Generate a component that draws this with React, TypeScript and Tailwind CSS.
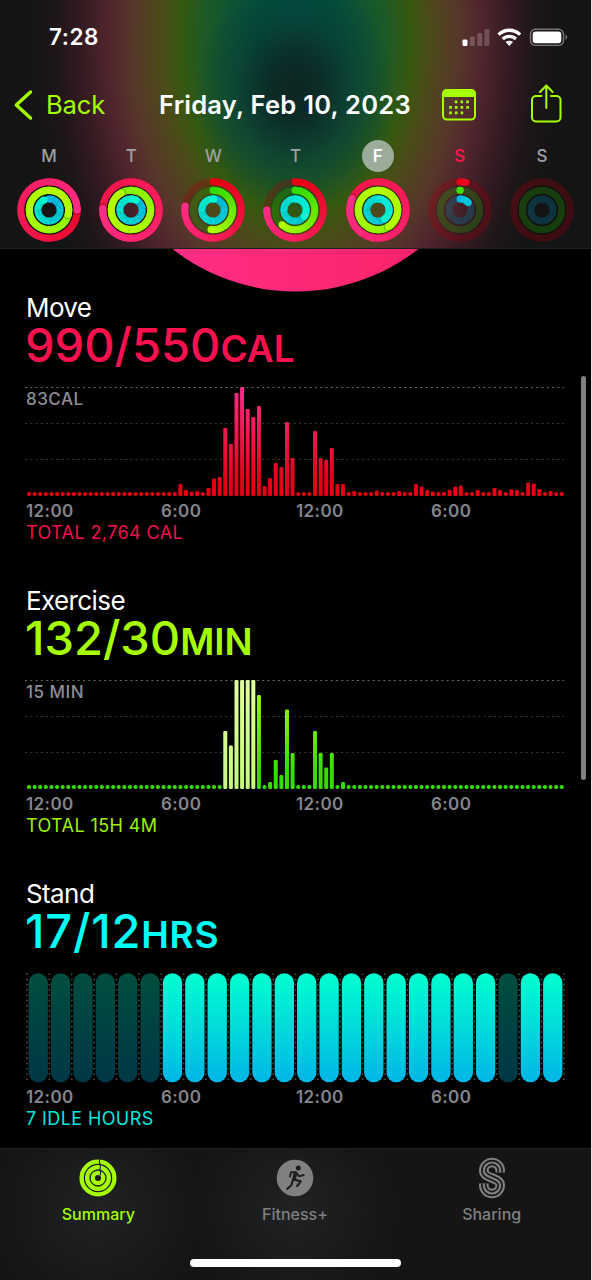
import { useId } from "react";

type Ring = { sweep: number; r: number; from: number[]; to: number[] };

const RED = [230, 0, 18];
const PINK = [255, 45, 135];
const GREEN = [48, 220, 0];
const LIME = [178, 255, 0];
const BLUE = [0, 184, 228];
const TEAL = [0, 250, 208];

// sweep of each ring in degrees, more than 360 is a second lap
const days = [
  { name: "M", move: 450, exercise: 823, stand: 333 },
  { name: "T", move: 633, exercise: 690, stand: 388 },
  { name: "W", move: 278, exercise: 186, stand: 366 },
  { name: "T", move: 270, exercise: 221, stand: 486 },
  { name: "F", move: 654, exercise: 868, stand: 505, selected: true },
  { name: "S", move: 12, exercise: 0.5, stand: 48, today: true },
  { name: "S", move: 0, exercise: 0, stand: 0 },
];

const flat = (n: number) => Array<number>(n).fill(4);

const moveBars = [
  ...flat(27),
  12, 6, 4.5, 5, 4, 8, 17.5, 19, 68, 52, 103, 109, 87, 79, 90, 10, 18, 33, 29,
  74, 38, 4, 4, 4, 65, 38, 36, 48, 12, 12, 4, 5, 4, 4, 4, 5.5, 4, 4, 4, 5, 4, 4,
  12, 9.5, 6, 4.5, 4, 4, 6, 9.5, 10.5, 4, 4, 6, 4, 4, 8, 6, 4, 6.5, 6, 4, 13.5,
  12.5, 7, 4, 5, 4, 4,
];

const exerciseBars = [
  ...flat(35),
  58, 43.5, 109, 109, 109, 109, 94, 4, 7, 29, 14, 79.5, 36, 4, 4, 4, 58, 36,
  21.5, 36, 4, 7,
  ...flat(39),
];

const idleHours = [0, 1, 2, 3, 4, 5, 21];

function point(r: number, deg: number) {
  const a = ((deg - 90) * Math.PI) / 180;
  return [33 + r * Math.cos(a), 33 + r * Math.sin(a)];
}

function RingArc({ sweep, r, from, to }: Ring) {
  const mix = (t: number) => {
    const k = sweep > 680 ? Math.min(1, t * 1.3) : t;
    return `rgb(${from.map((c, i) => Math.round(c + (to[i] - c) * k)).join(",")})`;
  };
  const steps = Math.ceil(sweep / 6);
  const [sx, sy] = point(r, 0);
  const [ex, ey] = point(r, sweep);
  const [hx, hy] = point(r, sweep + 4);
  return (
    <g fill="none" strokeWidth="7">
      <circle cx="33" cy="33" r={r} stroke={mix(0)} opacity="0.21" />
      {sweep > 0 && <circle cx={sx} cy={sy} r="3.5" fill={mix(0)} />}
      {Array.from({ length: steps }, (_, i) => {
        const a = (sweep * i) / steps;
        const b = (sweep * (i + 1)) / steps;
        const [x1, y1] = point(r, a);
        const [x2, y2] = point(r, Math.min(b + 1, sweep));
        return (
          <g key={i}>
            {i === steps - 1 && sweep > 340 && (
              <circle cx={hx} cy={hy} r="3.4" fill="#000" opacity="0.22" />
            )}
            <path
              d={`M${x1} ${y1}A${r} ${r} 0 0 1 ${x2} ${y2}`}
              stroke={mix(i / steps)}
            />
          </g>
        );
      })}
      {sweep > 0 && (
        <circle cx={ex} cy={ey} r="3.5" fill={mix(sweep < 60 ? 0.1 : 1)} />
      )}
    </g>
  );
}

function Header() {
  return (
    <header className="h-[249px] border-b border-[#202020] bg-[radial-gradient(ellipse_100px_120px_at_295px_90px,#0d2523_0%,#0d2825e6_25%,#0b3a3390_60%,transparent_100%),radial-gradient(ellipse_275px_420px_at_295px_40px,#005248_0%,#00503f_14%,#0c5438_22%,#1c5a26_33%,#365810_42%,#4b4b18_49%,#57372a_59%,#50252d_68%,#341a21_78%,#1e1618_87%,#141414_97%)]">
      <div className="flex h-[73px] items-center justify-between pr-6 pl-[49px]">
        <span className="text-[22.5px] font-semibold tracking-[0.5px] text-white">
          7:28
        </span>
        <svg width="106" height="20" viewBox="0 0 106 20" fill="#fff">
          <g transform="translate(0.5 0)">
            <rect x="1" y="12.5" width="5" height="6.5" rx="1.3" />
            <g opacity="0.2">
              <rect x="8.3" y="9.5" width="5" height="9.5" rx="1.3" />
              <rect x="15.8" y="6" width="5" height="13" rx="1.3" />
              <rect x="23" y="2" width="5" height="17" rx="1.3" />
            </g>
            <g fill="none" stroke="#fff" strokeWidth="3.4">
              <path d="M37 7.6a15.5 15.5 0 0 1 21.6 0" />
              <path d="M41.2 12a9.5 9.5 0 0 1 13.2 0" />
            </g>
            <path d="M44.1 15.1a5.4 5.4 0 0 1 7.4 0L47.8 19z" />
            <rect
              x="69"
              y="2.2"
              width="33"
              height="16.2"
              rx="5"
              fill="none"
              stroke="#777"
              strokeWidth="1.4"
            />
            <rect x="71.2" y="4.4" width="28.6" height="11.8" rx="3" />
            <path d="M104 7q3.200 3.200 0 6.400z" fill="#777" />
          </g>
        </svg>
      </div>
      <div className="flex h-16 items-center text-[#a6ff00]">
        <svg width="34" height="32" viewBox="0 0 34 32" className="ml-1">
          <path
            d="M26.5 3 12.3 16 26.5 29"
            fill="none"
            stroke="currentColor"
            strokeWidth="3.4"
            strokeLinecap="round"
            strokeLinejoin="round"
          />
        </svg>
        <span className="ml-2 w-[113px] text-[25.5px] tracking-[-0.1px]">
          Back
        </span>
        <h1 className="w-[283px] text-[25.5px] font-semibold tracking-[0.25px] whitespace-nowrap text-white">
          Friday, Feb 10, 2023
        </h1>
        <svg width="34" height="32" viewBox="0 0 34 32">
          <rect
            x="1"
            y="1"
            width="32"
            height="29.6"
            rx="4"
            fill="none"
            stroke="currentColor"
            strokeWidth="2"
          />
          <path d="M0 8V5a5 5 0 0 1 5-5h24a5 5 0 0 1 5 5v3z" fill="currentColor" />
          <path
            d="M12.8 12.9h15.4M7.2 18.4h21M7.2 23.9h15"
            stroke="currentColor"
            strokeWidth="2.6"
            strokeDasharray="2.6 3.1"
          />
        </svg>
        <svg
          width="32"
          height="40"
          viewBox="0 0.5 32 40"
          className="-mt-0.5 ml-[54px]"
          fill="none"
          stroke="currentColor"
          strokeWidth="2"
          strokeLinecap="round"
          strokeLinejoin="round"
        >
          <path d="M11.5 12.5H6a4 4 0 0 0-4 4V34a4 4 0 0 0 4 4h20.5a4 4 0 0 0 4-4V16.5a4 4 0 0 0-4-4H21" />
          <path d="M16.3 24.5V2M10 8.5 16.3 2l6.3 6.5" />
        </svg>
      </div>
      <div className="ml-2 grid w-[575px] grid-cols-7">
        {days.map((day, i) => (
          <div key={i} className="flex flex-col items-center pt-[3px]">
            <span
              className={
                "flex size-8 items-center justify-center rounded-full pt-0.5 text-[17px] font-medium " +
                (day.selected
                  ? "bg-[#9bac9b] font-semibold text-white"
                  : day.today
                    ? "text-[#ff1450]"
                    : "text-[#a0a0a2]")
              }
            >
              {day.name}
            </span>
            <svg width="66" height="66" viewBox="0 0 66 66" className="mt-[5px]">
              <circle
                cx="33"
                cy="33"
                r="19.5"
                fill="none"
                stroke="#000"
                strokeWidth="24"
                opacity={day.move > 300 ? 0.3 : 0.12}
              />
              <RingArc sweep={day.move} r={28.2} from={RED} to={PINK} />
              <RingArc sweep={day.exercise} r={19.7} from={GREEN} to={LIME} />
              <RingArc sweep={day.stand} r={11.1} from={BLUE} to={TEAL} />
            </svg>
          </div>
        ))}
      </div>
    </header>
  );
}

function BarChart({
  bars,
  top,
  bottom,
  workout,
}: {
  bars: number[];
  top: string;
  bottom: string;
  workout?: number[];
}) {
  const id = useId();
  return (
    <svg width="542" height="110" viewBox="0 0 542 110" className="block">
      <defs>
        <linearGradient
          id={id}
          gradientUnits="userSpaceOnUse"
          x1="0"
          y1="0"
          x2="0"
          y2="109"
        >
          <stop offset="0" stopColor={top} />
          <stop offset="0.85" stopColor={bottom} />
        </linearGradient>
        <linearGradient
          id={id + "w"}
          gradientUnits="userSpaceOnUse"
          x1="0"
          y1="0"
          x2="0"
          y2="109"
        >
          <stop offset="0" stopColor="#dfffa0" />
          <stop offset="1" stopColor="#c6f780" />
        </linearGradient>
      </defs>
      <g strokeDasharray="2 3.27">
        <path d="M1 .5H540" stroke="#686868" />
        <path d="M1 36.5H540M1 72.5H540" stroke="#383838" />
      </g>
      {bars.map((h, i) => (
        <rect
          key={i}
          x={3 + i * 5.608}
          y={109 - h}
          width="4"
          height={h}
          rx={h <= 4 ? 1.8 : 1.3}
          fill={`url(#${id}${workout?.includes(i) ? "w" : ""})`}
        />
      ))}
    </svg>
  );
}

function StandChart() {
  return (
    <svg width="542" height="110" viewBox="0 0 542 110" className="block">
      <defs>
        <linearGradient id="stand" x1="0" y1="0" x2="0" y2="1">
          <stop offset="0" stopColor="#00ffd0" />
          <stop offset="1" stopColor="#00b6e6" />
        </linearGradient>
        <linearGradient id="idle" x1="0" y1="0" x2="0" y2="1">
          <stop offset="0" stopColor="#004e3e" />
          <stop offset="1" stopColor="#003746" />
        </linearGradient>
      </defs>
      {Array.from({ length: 25 }, (_, i) => (
        <path
          key={i}
          d={`M${3 + i * 22.37} .5V109`}
          stroke="#505050"
          strokeWidth="1.6"
          strokeDasharray="1.6 3.65"
        />
      ))}
      {Array.from({ length: 24 }, (_, i) => (
        <rect
          key={i}
          x={4.6 + i * 22.37}
          y="0.3"
          width="19.3"
          height="109"
          rx="9.6"
          fill={idleHours.includes(i) ? "url(#idle)" : "url(#stand)"}
        />
      ))}
    </svg>
  );
}

function Section({
  title,
  value,
  unit,
  color,
  max,
  total,
  totalColor,
  children,
}: {
  title: string;
  value: string;
  unit: string;
  color: string;
  max?: string;
  total: string;
  totalColor: string;
  children: React.ReactNode;
}) {
  return (
    <section className="h-[293px] shrink-0 pt-px">
      <h2 className="pl-[26px] text-[26px] leading-[30px] tracking-[-0.6px] text-white">
        {title}
      </h2>
      <p
        className={
          "-mt-px h-[47px] pl-[25px] text-[47px] leading-[46px] font-medium whitespace-nowrap " +
          color
        }
      >
        {value}
        <span className="text-[37px] leading-none font-semibold">{unit}</span>
      </p>
      <div className="relative mt-[18px] ml-6">
        {max && (
          <span className="absolute top-0.5 left-0.5 text-[17px] leading-5 font-medium tracking-[0.5px] text-[#8e8e93]">
            {max}
          </span>
        )}
        {children}
      </div>
      <div className="mt-[3px] grid w-[566px] grid-cols-4 pl-[26px] text-[17px] leading-[22px] font-semibold tracking-[0.4px] text-[#85858a]">
        <span>12:00</span>
        <span>6:00</span>
        <span>12:00</span>
        <span>6:00</span>
      </div>
      <p
        className={
          "pl-[26px] text-[18px] leading-[22px] tracking-[0.4px] " + totalColor
        }
      >
        {total}
      </p>
    </section>
  );
}

function TabBar() {
  return (
    <footer className="relative h-[132px] border-t border-[#202020] bg-[#151515] bg-[radial-gradient(circle_at_98px_60px,#202223_0%,transparent_100px),radial-gradient(circle_at_295px_60px,#202223_0%,transparent_100px)] text-[16px] font-medium">
      <nav className="grid w-[590px] grid-cols-3 pt-2">
        <div className="flex flex-col items-center text-[#a6ff00]">
          <svg width="42" height="42" viewBox="0 0 42 42">
            <g
              transform="translate(21 21)"
              fill="none"
              stroke="currentColor"
              strokeWidth="4.3"
            >
              <circle r="16.4" />
              <circle r="10.8" />
              <circle r="5.2" />
              <path
                d="M1.5-19V-15l1 1.5-.5 5 .8 1-.6 5"
                stroke="#1c1e1e"
                strokeWidth="1.1"
              />
            </g>
          </svg>
          <span className="leading-[31px]">Summary</span>
        </div>
        <div className="flex flex-col items-center text-[#808080]">
          <svg width="42" height="42" viewBox="-3 -3 42 42">
            <circle cx="18" cy="18" r="18.3" fill="currentColor" />
            <circle cx="21.3" cy="8" r="2.5" fill="#1c1e1e" />
            <g
              fill="none"
              stroke="#1c1e1e"
              strokeWidth="1.9"
              strokeLinecap="round"
              strokeLinejoin="round"
            >
              <path d="M13 16.5 14 12.3h5L22 16.3l4.7-1.3" />
              <path d="M18.5 13.5 17 19" strokeWidth="3.8" />
              <path
                d="m17.5 19.6 6.2 1.8-3.6 4.6M16 20l-1.7 5.2-4 3.6"
                strokeWidth="2.2"
              />
            </g>
          </svg>
          <span className="leading-[31px]">Fitness+</span>
        </div>
        <div className="flex flex-col items-center text-[#808080]">
          <svg width="42" height="42" viewBox="-8 -0.5 42 42" fill="none">
            {[
              ["#808080", 9.6],
              ["#171717", 5.4],
              ["#808080", 2.2],
            ].map(([stroke, w]) => (
              <path
                key={w}
                d="M21.2 15V13.2a8.2 8.2 0 0 0-16.4 0C4.8 21.5 21.2 19.5 21.2 27.8a8.2 8.2 0 0 1-16.4 0V26"
                stroke={stroke}
                strokeWidth={w}
              />
            ))}
          </svg>
          <span className="leading-[31px]">Sharing</span>
        </div>
      </nav>
      <div className="mx-auto mt-[29px] h-2 w-[211px] rounded-full bg-white" />
    </footer>
  );
}

export default function App() {
  return (
    <div className="flex h-[1280px] w-[592px] flex-col overflow-hidden border-r border-[#e4e4e4] bg-black font-['Inter',sans-serif]">
      <Header />
      <main className="relative flex h-[899px] flex-col overflow-hidden">
        <svg width="591" height="43" viewBox="0 0 591 43" className="shrink-0">
          <defs>
            <linearGradient id="ring" x1="0.2" y1="0" x2="0.8" y2="0">
              <stop offset="0" stopColor="#ff2d85" />
              <stop offset="1" stopColor="#fa246a" />
            </linearGradient>
          </defs>
          <circle cx="295.5" cy="-156.5" r="199" fill="url(#ring)" />
        </svg>
        <Section
          title="Move"
          value="990/550"
          unit="CAL"
          color="text-[#ff1150]"
          max="83CAL"
          total="TOTAL 2,764 CAL"
          totalColor="text-[#ee1150]"
        >
          <BarChart bars={moveBars} top="#ff2d8c" bottom="#e60014" />
        </Section>
        <Section
          title="Exercise"
          value="132/30"
          unit="MIN"
          color="text-[#a6ff00]"
          max="15 MIN"
          total="TOTAL 15H 4M"
          totalColor="text-[#9cf000]"
        >
          <BarChart
            bars={exerciseBars}
            top="#a8ff00"
            bottom="#34dc00"
            workout={[35, 36, 37, 38, 39, 40]}
          />
        </Section>
        <Section
          title="Stand"
          value="17/12"
          unit="HRS"
          color="text-[#00fff6] tracking-[0.8px]"
          total="7 IDLE HOURS"
          totalColor="text-[#00e5dc]"
        >
          <StandChart />
        </Section>
        <div className="absolute top-[127px] right-[5px] h-[404px] w-[5px] rounded-full bg-[#808080]" />
      </main>
      <TabBar />
    </div>
  );
}
